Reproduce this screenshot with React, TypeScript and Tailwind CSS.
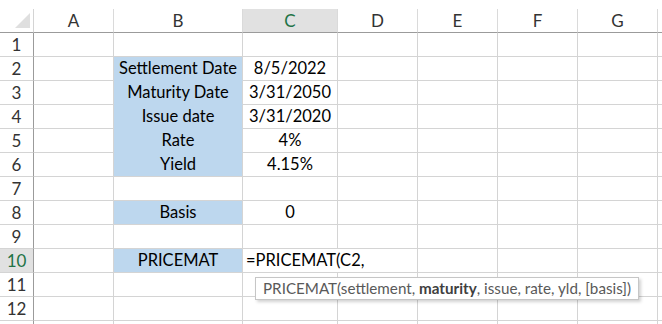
const cols = ['A', 'B', 'C', 'D', 'E', 'F', 'G', ''];

const labels: Record<number, string> = {
  2: 'Settlement Date',
  3: 'Maturity Date',
  4: 'Issue date',
  5: 'Rate',
  6: 'Yield',
  8: 'Basis',
  10: 'PRICEMAT',
};

const values: Record<number, string> = {
  2: '8/5/2022',
  3: '3/31/2050',
  4: '3/31/2020',
  5: '4%',
  6: '4.15%',
  8: '0',
};

const blueRows = [2, 3, 4, 5, 6, 8, 10];

export default function App() {
  const rows = Array.from({ length: 13 }, (_, i) => i + 1);
  return (
    <div
      className="w-[662px] h-[324px] overflow-hidden bg-white pt-[9px] text-[16.5px] text-black"
      style={{ fontFamily: 'Lato, "Open Sans", sans-serif' }}
    >
      <div className="grid grid-cols-[34px_80px_129px_95px_80px_80px_80px_80px_80px] auto-rows-[24px]">
        {/* header row */}
        <div className="relative border-r border-b border-r-[#d4d4d4] border-b-[#9b9b9b]">
          <div className="absolute right-[3px] bottom-[4px] w-0 h-0 border-l-[15px] border-t-[15px] border-l-transparent border-t-transparent border-b-0 border-r-[15px] border-r-[#dfdfdf]" />
        </div>
        {cols.map((c, i) => (
          <div
            key={i}
            className={`flex items-center justify-center border-r border-b border-r-[#dadada] border-b-[#9b9b9b] text-[17px] ${
              c === 'C' ? 'bg-[#e1e1e1] text-[#217346]' : 'text-[#333]'
            }`}
          >
            {c}
          </div>
        ))}

        {rows.map((r) => (
          <Row key={r} r={r} />
        ))}
      </div>
    </div>
  );
}

function Row({ r }: { r: number }) {
  const blue = blueRows.includes(r);
  const blueBelow = blueRows.includes(r + 1);
  return (
    <>
      <div
        className={`flex items-center justify-center border-r border-b border-r-[#9b9b9b] border-b-[#d4d4d4] text-[17px] ${
          r === 10 ? 'bg-[#e1e1e1] text-[#217346]' : 'text-[#333]'
        }`}
      >
        {r < 13 ? r : ''}
      </div>
      <div className="border-r border-b border-[#d4d4d4]" />
      <div
        className={`flex items-center justify-center border-r border-b border-r-[#d4d4d4] ${
          blue ? 'bg-[#bdd7ee]' : ''
        } ${blue && blueBelow ? 'border-b-[#bdd7ee]' : 'border-b-[#d4d4d4]'}`}
      >
        {labels[r] ?? ''}
      </div>
      {r === 10 ? (
        <div className="relative flex items-center border-b border-b-[#d4d4d4] pl-[3px] whitespace-nowrap overflow-visible z-10">
          =PRICEMAT(C2,
          <div className="absolute left-[12px] top-[28px] h-[23px] w-[384px] flex items-center border border-[#c6c6c6] bg-white pl-[7px] text-[15.2px] text-[#595959] shadow-[2px_2px_3px_rgba(0,0,0,0.18)]">
            PRICEMAT(settlement,&nbsp;<b className="text-[#404040]">maturity</b>, issue, rate, yld, [basis])
          </div>
        </div>
      ) : (
        <div className="flex items-center justify-center border-r border-b border-[#d4d4d4]">
          {values[r] ?? ''}
        </div>
      )}
      {['D', 'E', 'F', 'G', 'H'].map((c) => (
        <div key={c} className="border-r border-b border-[#d4d4d4]" />
      ))}
    </>
  );
}
